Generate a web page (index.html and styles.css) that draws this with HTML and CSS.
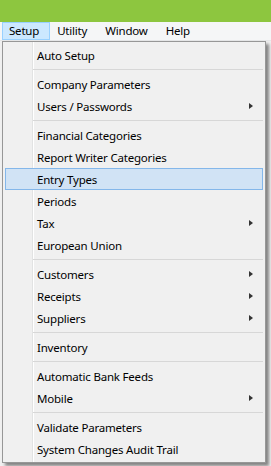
FILE: index.html
```html
<!DOCTYPE html>
<html lang="en">
<head>
    <meta charset="UTF-8">
    <meta name="viewport" content="width=device-width, initial-scale=1.0">
    <title>Setup menu</title>
<link rel="stylesheet" href="styles.css">
</head>
<body>
    <div class="titlebar"></div>
    <div class="menubar">
        <span class="top-item open">Setup</span>
        <span class="top-item">Utility</span>
        <span class="top-item">Window</span>
        <span class="top-item">Help</span>
    </div>
    <div class="window-body"></div>

    <div class="dropdown">
        <div class="item">Auto Setup</div>
        <div class="sep"></div>
        <div class="item">Company Parameters</div>
        <div class="item sub">Users / Passwords</div>
        <div class="sep"></div>
        <div class="item">Financial Categories</div>
        <div class="item">Report Writer Categories</div>
        <div class="item active">Entry Types</div>
        <div class="item">Periods</div>
        <div class="item sub">Tax</div>
        <div class="item">European Union</div>
        <div class="sep"></div>
        <div class="item sub">Customers</div>
        <div class="item sub">Receipts</div>
        <div class="item sub">Suppliers</div>
        <div class="sep"></div>
        <div class="item">Inventory</div>
        <div class="sep"></div>
        <div class="item">Automatic Bank Feeds</div>
        <div class="item sub">Mobile</div>
        <div class="sep"></div>
        <div class="item">Validate Parameters</div>
        <div class="item">System Changes Audit Trail</div>
    </div>
</body>
</html>
```

FILE: styles.css
```css
* {
    box-sizing: border-box;
}
body {
    margin: 0;
    font-family: "Noto Sans", "Open Sans", sans-serif;
    font-size: 11.5px;
    letter-spacing: -0.2px;
    color: #000;
    background-color: #f0f0f0;
    height: 466px;
    overflow: hidden;
}
.titlebar {
    height: 22px;
    background-color: #8dc63f;
}
.menubar {
    display: flex;
    height: 19px;
    padding-left: 2px;
    background-color: #f5f6f7;
    border-bottom: 1px solid #e6e7e8;
}
.top-item {
    display: flex;
    align-items: center;
    padding: 0 10px 0 6px;
    border: 1px solid transparent;
    line-height: 16px;
}
.top-item.open {
    background-color: #cce8ff;
    border-color: #99d1ff;
}
.window-body {
    height: 425px;
}

/* the open menu sits over the window */
.dropdown {
    position: absolute;
    left: 2px;
    top: 41px;
    width: 264px;
    padding: 2px;
    background-color: #f0f0f0;
    background-image: linear-gradient(to right, transparent 29px, #e2e3e3 29px, #e2e3e3 30px, #fff 30px, #fff 31px, transparent 31px);
    border: 1px solid #979797;
    box-shadow: 3px 3px 3px rgba(0, 0, 0, 0.45);
}
.item {
    display: flex;
    align-items: center;
    justify-content: space-between;
    height: 22px;
    padding: 0 9px 0 31px;
    border: 1px solid transparent;
    white-space: nowrap;
}
.item.active {
    background-color: #d1e3f5;
    border-color: #84b7ea;
}
.item.sub::after {
    content: "";
    border-left: 4px solid #333;
    border-top: 3.5px solid transparent;
    border-bottom: 3.5px solid transparent;
}
.sep {
    height: 7px;
    margin-left: 28px;
    padding-top: 3px;
}
.sep::before {
    content: "";
    display: block;
    height: 1px;
    background-color: #d7d7d7;
}
```
